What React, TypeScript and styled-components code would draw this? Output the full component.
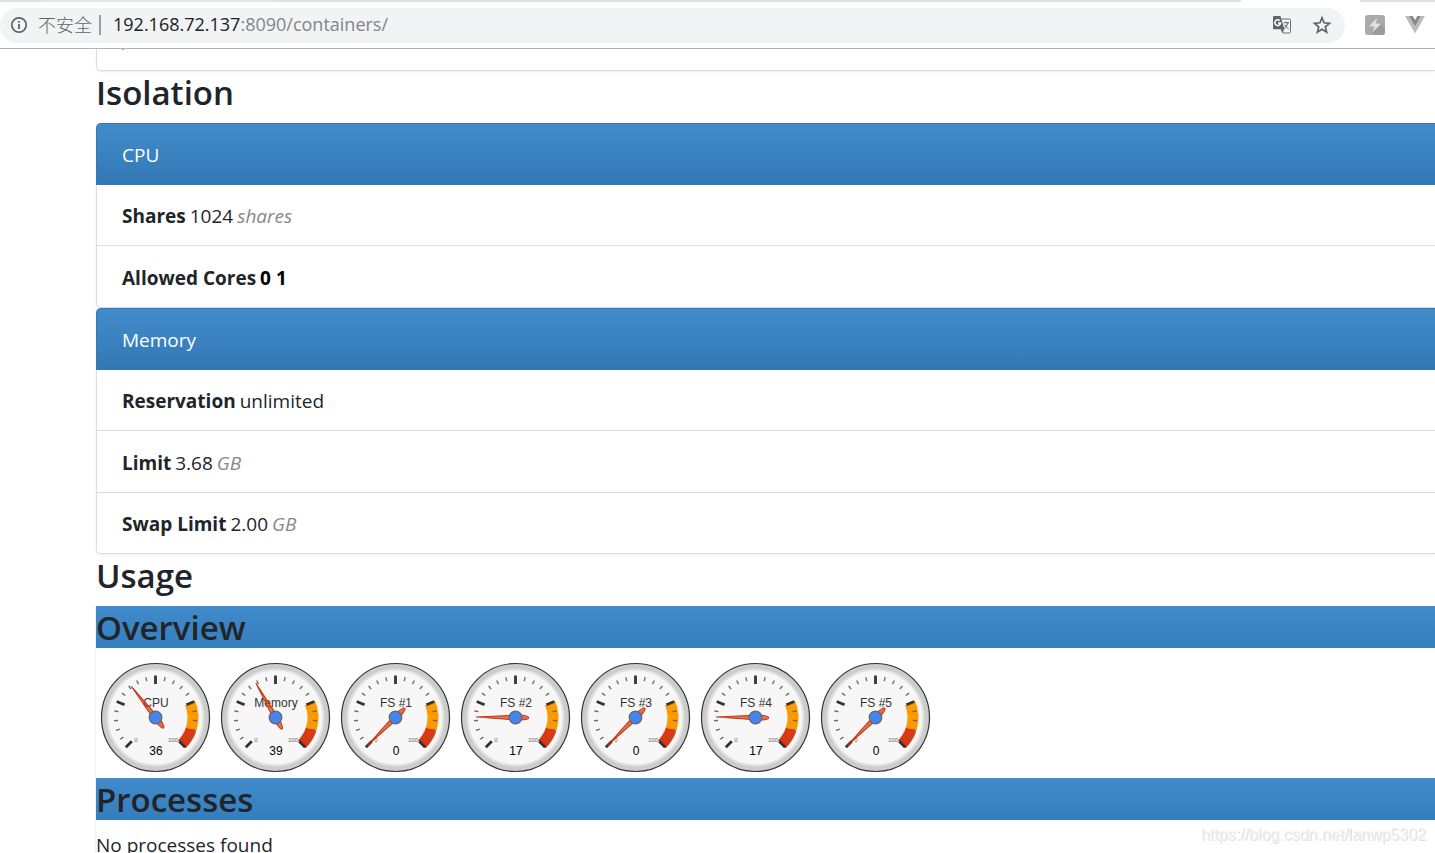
import React from "react";
import styled, { createGlobalStyle, css } from "styled-components";

const GlobalStyle = createGlobalStyle`
  *, *::before, *::after { box-sizing: border-box; }
  body {
    margin: 0;
    background: #fff;
    color: #212529;
    font-family: "Open Sans", "Noto Sans CJK SC", sans-serif;
    font-size: 19px;
    line-height: 30px;
  }
`;

const blueGradient = css`
  background: linear-gradient(to bottom, #428bca 0%, #3278b5 100%);
`;

const Browser = styled.div`
  display: flex;
  flex-direction: column;
  height: 100vh;
  overflow: hidden;
`;

const TabStrip = styled.div`
  display: flex;
  flex: none;
  height: 2px;
`;

const TabEdge = styled.div<{ $tone: string; $width?: number }>`
  flex: ${(p) => (p.$width ? `0 0 ${p.$width}px` : "1")};
  background: ${(p) => p.$tone};
`;

const Toolbar = styled.header`
  display: flex;
  flex: none;
  align-items: center;
  height: 47px;
  padding-right: 10px;
  border-bottom: 1px solid #b3b3b3;
`;

const AddressPill = styled.div`
  display: flex;
  flex: 1;
  align-items: center;
  height: 35px;
  margin-right: 20px;
  padding: 0 13px 0 10px;
  border-radius: 18px;
  background: #f1f3f4;
`;

const SecurityLabel = styled.span`
  margin-left: 10px;
  padding-right: 7px;
  border-right: 2px solid #9a9da0;
  color: #5f6368;
  font-size: 18px;
  font-weight: 300;
  line-height: 20px;
`;

const Url = styled.span`
  flex: 1;
  margin-left: 12px;
  padding-bottom: 2px;
  color: #80868b;
  font-size: 18px;
  line-height: 28px;
`;

const Host = styled.span`
  color: #202124;
`;

const IconButton = styled.button`
  display: flex;
  flex: none;
  align-items: center;
  margin: 0 0 0 20px;
  padding: 0;
  border: 0;
  background: none;
`;

const ExtensionButton = styled(IconButton)`
  &:first-of-type {
    margin-left: 0;
  }
`;

const Page = styled.main`
  flex: 1;
  min-height: 0;
  padding-left: 96px;
  overflow: hidden;
`;

const ScrolledCard = styled.div`
  height: 22px;
  padding: 0 25px;
  border: solid #ddd;
  border-width: 0 0 1px 1px;
  border-radius: 0 0 0 5px;
  box-shadow: 0 1px 2px rgba(0, 0, 0, 0.08);

  &::before {
    content: "";
    display: block;
    width: 2px;
    height: 1px;
    background: #7f9fc4;
  }
`;

const Heading = styled.h2<{ $bar?: boolean }>`
  margin: 0 0 10px;
  padding-top: 2px;
  font-size: 33px;
  font-weight: 600;
  line-height: 40px;
  ${(p) =>
    p.$bar &&
    css`
      background: linear-gradient(to bottom, #428bca 0%, #357ebd 100%);
    `}
`;

const ListGroup = styled.ul`
  margin: 0;
  padding: 0;
  list-style: none;
  border-radius: 5px 0 0 5px;
  box-shadow: 0 1px 2px rgba(0, 0, 0, 0.08);
`;

const ListRow = styled.li`
  display: flex;
  align-items: center;
  gap: 4px;
  height: 62px;
  padding: 2px 25px 0;
  border: solid #ddd;
  border-width: 0 0 1px 1px;

  &:nth-child(even) {
    height: 61px;
  }

  &:last-child {
    border-bottom-left-radius: 5px;
  }
`;

const ListHeader = styled(ListRow)`
  ${blueGradient}
  padding-top: 0;
  border-color: #3278b5;
  border-width: 1px 0 0 1px;
  border-top-left-radius: 5px;
  color: #fff;
`;

const Label = styled.span`
  font-weight: 700;
`;

const Cores = styled(Label)`
  color: #000;
`;

const Unit = styled.i`
  color: #888;
`;

const UsagePanel = styled.section`
  margin-left: -1px;
  border-left: 1px solid #f3f3f3;
`;

const Gauges = styled.div`
  display: flex;
  flex-wrap: wrap;
`;

const GaugeSvg = styled.svg`
  display: block;
  font-family: "Liberation Sans", Arial, sans-serif;
  text-anchor: middle;
`;

const Message = styled.p`
  margin: 0;
`;

const Watermark = styled.span`
  position: fixed;
  right: 9px;
  bottom: 8px;
  color: #f0f0f0;
  font-family: "Liberation Sans", Arial, sans-serif;
  font-size: 16px;
  line-height: 20px;
  text-shadow: 1px 1px 0 #e2e2e2;
`;

const CX = 59.5;
const CY = 59.5;

function point(value: number, radius: number): [number, number] {
  const angle = ((-135 + value * 2.7) * Math.PI) / 180;
  return [CX + Math.sin(angle) * radius, CY - Math.cos(angle) * radius];
}

function band(from: number, to: number) {
  const a = point(from, 43);
  const b = point(to, 43);
  const c = point(to, 32);
  const d = point(from, 32);
  return `M${a} A43 43 0 0 1 ${b} L${c} A32 32 0 0 0 ${d} Z`;
}

function Gauge({ name, value }: { name: string; value: number }) {
  const ticks = Array.from({ length: 21 }, (_, i) => i);
  return (
    <GaugeSvg width="120" height="120" viewBox="0 0 120 120" role="img" aria-label={`${name} ${value}`}>
      <circle cx={CX} cy={CY} r="54" fill="#ccc" stroke="#333" strokeWidth="1.2" />
      <circle cx={CX} cy={CY} r="48" fill="#f7f7f7" stroke="#e0e0e0" strokeWidth="2" />
      <path d={band(75, 90)} fill="#ff9900" />
      <path d={band(90, 100)} fill="#dc3912" />
      {ticks.map((i) => {
        const major = i % 5 === 0;
        const [x1, y1] = point(i * 5, major ? 42 : 41.5);
        const [x2, y2] = point(i * 5, major ? 33.5 : 37.5);
        return (
          <line
            key={i}
            x1={x1}
            y1={y1}
            x2={x2}
            y2={y2}
            stroke={major ? "#333" : "#666"}
            strokeWidth={major ? 2.8 : 1.3}
          />
        );
      })}
      <text x="60" y="49" fontSize="12" fill="#333">{name}</text>
      <text x="40" y="84" fontSize="6" fill="#666">0</text>
      <text x="77" y="84" fontSize="6" fill="#666">100</text>
      <text x="60" y="97" fontSize="12" fill="#000">{value}</text>
      <g transform={`rotate(${-135 + value * 2.7} ${CX} ${CY})`}>
        <path
          d="M59.5 20 L61.8 59.5 Q62.6 66 60.8 71.5 Q59.5 74 58.2 71.5 Q56.4 66 57.2 59.5 Z"
          fill="#dc3912"
          fillOpacity="0.7"
          stroke="#c63310"
          strokeWidth="1"
        />
      </g>
      <circle cx={CX} cy={CY} r="6.3" fill="#4684ee" stroke="#666" strokeWidth="1.2" />
    </GaugeSvg>
  );
}

const gauges = [
  { name: "CPU", value: 36 },
  { name: "Memory", value: 39 },
  { name: "FS #1", value: 0 },
  { name: "FS #2", value: 17 },
  { name: "FS #3", value: 0 },
  { name: "FS #4", value: 17 },
  { name: "FS #5", value: 0 },
];

function InfoIcon() {
  return (
    <svg width="18" height="18" viewBox="0 0 18 18" fill="none" stroke="#5f6368">
      <circle cx="9" cy="9" r="7.2" strokeWidth="1.7" />
      <path d="M9 8v5M9 5v1.8" strokeWidth="1.8" />
    </svg>
  );
}

function TranslateIcon() {
  return (
    <svg width="20" height="20" viewBox="0 0 20 20" fill="none">
      <path d="M8 4h9.3q1.2 0 1.2 1.2v11.6q0 1.2-1.2 1.2H11z" fill="#f7f8f8" stroke="#6b6f73" strokeWidth="1" />
      <path d="M2 1h6.4l4 13.2H2q-1 0-1-1V2q0-1 1-1z" fill="#5f6368" />
      <path d="M8.5 14.2h3.9L10.4 18z" fill="#5f6368" />
      <path d="M7.8 5.6A2.9 2.9 0 1 0 8.6 8H6" stroke="#fff" strokeWidth="1.5" />
      <path d="M11.5 7.8h5.5M14.2 6.4v1.4M16 7.8q-.8 3.6-4 5.8M12.6 9.6q1.4 2.6 4.2 4.4" stroke="#5f6368" strokeWidth="1" />
    </svg>
  );
}

function StarIcon() {
  return (
    <svg width="20" height="20" viewBox="0 0 20 20" fill="none">
      <path
        d="M10 2.8l2 5 5.5.5-4.2 3.5 1.3 5.4-4.6-2.9-4.6 2.9 1.3-5.4-4.2-3.5 5.5-.5z"
        stroke="#5f6368"
        strokeWidth="1.7"
      />
    </svg>
  );
}

function BoltIcon() {
  return (
    <svg width="20" height="20" viewBox="0 0 20 20">
      <rect width="20" height="20" rx="3" fill="#aaa" />
      <path d="M15.5 9L20 13v4q0 3-3 3H9l-1.5-2.5z" fill="#9b9b9b" />
      <path d="M12.5 2.5L4 11.2l5.6.2L7.5 17.5 16 8.8l-5.6-.2z" fill="#e2e2e2" />
    </svg>
  );
}

function VueIcon() {
  return (
    <svg width="20" height="18" viewBox="0 0 20 18">
      <path d="M0 0h4l6 10.4L16 0h4L10 17.6z" fill="#bcbcbc" />
      <path d="M4 0h3.8L10 4l2.2-4H16l-6 10.4z" fill="#8a8a8a" />
    </svg>
  );
}

export default function App() {
  return (
    <Browser>
      <GlobalStyle />
      <TabStrip>
        <TabEdge $tone="#dee1e6" $width={45} />
        <TabEdge $tone="#e5e5ea" $width={228} />
        <TabEdge $tone="#dee1e6" />
        <TabEdge $tone="#ffffff" $width={119} />
        <TabEdge $tone="#dee1e6" $width={75} />
      </TabStrip>
      <Toolbar>
        <AddressPill>
          <InfoIcon />
          <SecurityLabel lang="zh-CN">不安全</SecurityLabel>
          <Url>
            <Host>192.168.72.137</Host>:8090/containers/
          </Url>
          <IconButton aria-label="Translate">
            <TranslateIcon />
          </IconButton>
          <IconButton aria-label="Bookmark">
            <StarIcon />
          </IconButton>
        </AddressPill>
        <ExtensionButton aria-label="Extension">
          <BoltIcon />
        </ExtensionButton>
        <ExtensionButton aria-label="Vue devtools">
          <VueIcon />
        </ExtensionButton>
      </Toolbar>

      <Page>
        <ScrolledCard />

        <Heading>Isolation</Heading>
        <ListGroup>
          <ListHeader>CPU</ListHeader>
          <ListRow>
            <Label>Shares</Label> 1024 <Unit>shares</Unit>
          </ListRow>
          <ListRow>
            <Label>Allowed Cores</Label> <Cores>0 1</Cores>
          </ListRow>
        </ListGroup>
        <ListGroup>
          <ListHeader>Memory</ListHeader>
          <ListRow>
            <Label>Reservation</Label> unlimited
          </ListRow>
          <ListRow>
            <Label>Limit</Label> 3.68 <Unit>GB</Unit>
          </ListRow>
          <ListRow>
            <Label>Swap Limit</Label> 2.00 <Unit>GB</Unit>
          </ListRow>
        </ListGroup>

        <Heading>Usage</Heading>
        <UsagePanel>
          <Heading $bar>Overview</Heading>
          <Gauges>
            {gauges.map((g) => (
              <Gauge key={g.name} name={g.name} value={g.value} />
            ))}
          </Gauges>
          <Heading $bar>Processes</Heading>
          <Message>No processes found</Message>
        </UsagePanel>
      </Page>
      <Watermark>https://blog.csdn.net/lanwp5302</Watermark>
    </Browser>
  );
}
